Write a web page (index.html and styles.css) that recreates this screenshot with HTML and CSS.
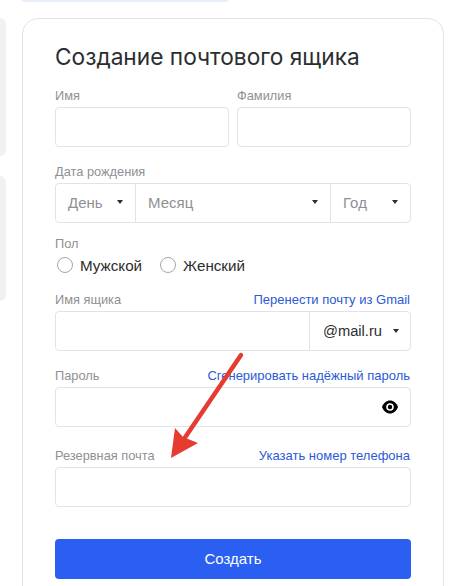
FILE: index.html
```html
<!DOCTYPE html>
<html lang="ru">

<head>
    <meta charset="UTF-8">
    <meta name="viewport" content="width=device-width, initial-scale=1.0">
    <title>Создание почтового ящика</title>
    <link rel="stylesheet" href="styles.css">
</head>

<body>
    <div class="page">
        <div class="side">
            <div class="side-panel side-panel-top"></div>
            <div class="side-panel side-panel-bottom"></div>
        </div>

        <div class="main">
            <div class="top-pill"></div>

            <form class="card">
                <h1>Создание почтового ящика</h1>

                <div class="name-row">
                    <div class="col">
                        <label class="label">Имя</label>
                        <div class="box"></div>
                    </div>
                    <div class="col">
                        <label class="label">Фамилия</label>
                        <div class="box"></div>
                    </div>
                </div>

                <div class="field field-date">
                    <label class="label">Дата рождения</label>
                    <div class="box date-box">
                        <div class="select select-day"><span>День</span><i class="caret"></i></div>
                        <div class="select select-month"><span>Месяц</span><i class="caret"></i></div>
                        <div class="select select-year"><span>Год</span><i class="caret"></i></div>
                    </div>
                </div>

                <div class="field field-gender">
                    <label class="label">Пол</label>
                    <div class="radios">
                        <div class="radio"><i class="circle"></i>Мужской</div>
                        <div class="radio"><i class="circle"></i>Женский</div>
                    </div>
                </div>

                <div class="field field-mailbox">
                    <div class="label-row">
                        <label class="label">Имя ящика</label>
                        <a class="link">Перенести почту из Gmail</a>
                    </div>
                    <div class="box mailbox-box">
                        <div class="domain"><span>@mail.ru</span><i class="caret"></i></div>
                    </div>
                </div>

                <div class="field field-password">
                    <div class="label-row">
                        <label class="label">Пароль</label>
                        <a class="link">Сгенерировать надёжный пароль</a>
                    </div>
                    <div class="box password-box">
                        <svg class="eye" viewBox="0 0 16 14" width="16" height="14">
                            <path d="M0 7C1.5 3 4.5 .5 8 .5S14.500 3 16 7c-1.500 4-4.500 6.500-8 6.500S1.500 11 0 7z"/>
                            <circle cx="8" cy="7" r="3" fill="none" stroke="#fff" stroke-width="1.6"/>
                        </svg>
                    </div>
                </div>

                <div class="field field-backup">
                    <div class="label-row">
                        <label class="label">Резервная почта</label>
                        <a class="link">Указать номер телефона</a>
                    </div>
                    <div class="box"></div>
                </div>

                <button type="button" class="submit">Создать</button>
            </form>
        </div>

        <!-- red annotation arrow -->
        <svg class="arrow" viewBox="0 0 454 586" width="454" height="586">
            <line x1="241" y1="355" x2="184" y2="439" stroke="#e53b30" stroke-width="4.5" stroke-linecap="round"/>
            <polygon points="171,458 175,428 183,437 198,443" fill="#e53b30"/>
        </svg>
    </div>
</body>

</html>
```

FILE: styles.css
```css
html,
body {
    margin: 0;
    padding: 0;
    background-color: #fff;
}

body {
    font-family: "Liberation Sans", Arial, sans-serif;
    color: #2c2d2e;
}

.page {
    position: relative;
    display: flex;
    width: 454px;
    height: 586px;
    overflow: hidden;
}

.side {
    width: 6px;
    margin-right: 16px;
    padding-top: 18px;
}

.side-panel {
    background-color: #f0f1f3;
    border-radius: 0 8px 8px 0;
}

.side-panel-top {
    height: 138px;
    margin-bottom: 20px;
}

.side-panel-bottom {
    height: 125px;
}

.main {
    width: 422px;
}

.top-pill {
    width: 206px;
    height: 2px;
    background-color: #e9eefc;
    border-radius: 0 0 8px 8px;
}

.card {
    box-sizing: border-box;
    height: 640px;
    margin-top: 16px;
    padding: 25px 32px 0 32px;
    border: 1px solid #e2e3e8;
    border-radius: 16px;
}

h1 {
    margin: 0 0 18px 0;
    font-family: Inter, sans-serif;
    font-size: 22.7px;
    line-height: 26px;
    font-weight: 400;
    color: #2c2d2e;
}

.label {
    display: block;
    height: 19px;
    font-size: 12.8px;
    line-height: 15px;
    color: #8f9094;
}

.label-row {
    display: flex;
    justify-content: space-between;
}

.link {
    margin-right: 1px;
    font-size: 13px;
    line-height: 15px;
    color: #2a5ad6;
}

.box {
    box-sizing: border-box;
    height: 40px;
    background-color: #fff;
    border: 1px solid #e2e3e8;
    border-radius: 4px;
}

.name-row {
    display: flex;
    gap: 8px;
}

.col {
    flex: 1;
}

.field-date {
    margin-top: 17px;
}

.date-box,
.mailbox-box,
.password-box {
    display: flex;
    align-items: center;
}

.select {
    box-sizing: border-box;
    display: flex;
    flex-shrink: 0;
    align-items: center;
    justify-content: space-between;
    height: 100%;
    padding: 0 12px 2px 12px;
    font-size: 15px;
    color: #8f9094;
}

.select-day {
    width: 80px;
    border-right: 1px solid #e2e3e8;
}

.select-month {
    width: 195px;
    border-right: 1px solid #e2e3e8;
}

.select-year {
    width: 79px;
}

.caret {
    width: 0;
    height: 0;
    border-left: 3.5px solid transparent;
    border-right: 3.5px solid transparent;
    border-top: 4px solid #2c2d2e;
}

.field-gender {
    margin-top: 13px;
}

.radios {
    display: flex;
    gap: 18px;
    padding-left: 2px;
}

.radio {
    display: flex;
    align-items: center;
    gap: 7px;
    height: 20px;
    font-size: 15.2px;
    color: #2c2d2e;
}

.circle {
    box-sizing: border-box;
    width: 16px;
    height: 16px;
    border: 1px solid #a5a7ab;
    border-radius: 50%;
}

.field-mailbox {
    margin-top: 17px;
}

.mailbox-box {
    justify-content: flex-end;
}

.domain {
    box-sizing: border-box;
    display: flex;
    align-items: center;
    justify-content: space-between;
    width: 101px;
    height: 100%;
    padding: 0 11px 0 13px;
    border-left: 1px solid #e2e3e8;
    font-size: 14.7px;
}

.field-password {
    margin-top: 17px;
}

.password-box {
    justify-content: flex-end;
    padding-right: 12px;
}

.field-backup {
    margin-top: 21px;
}

.submit {
    display: block;
    width: 356px;
    height: 40px;
    margin-top: 32px;
    padding-bottom: 2px;
    background-color: #2a5ff2;
    color: #fff;
    border: none;
    border-radius: 4px;
    font-family: "Liberation Sans", Arial, sans-serif;
    font-size: 15px;
}

.arrow {
    position: absolute;
    top: 0;
    left: 0;
    pointer-events: none;
}
```
